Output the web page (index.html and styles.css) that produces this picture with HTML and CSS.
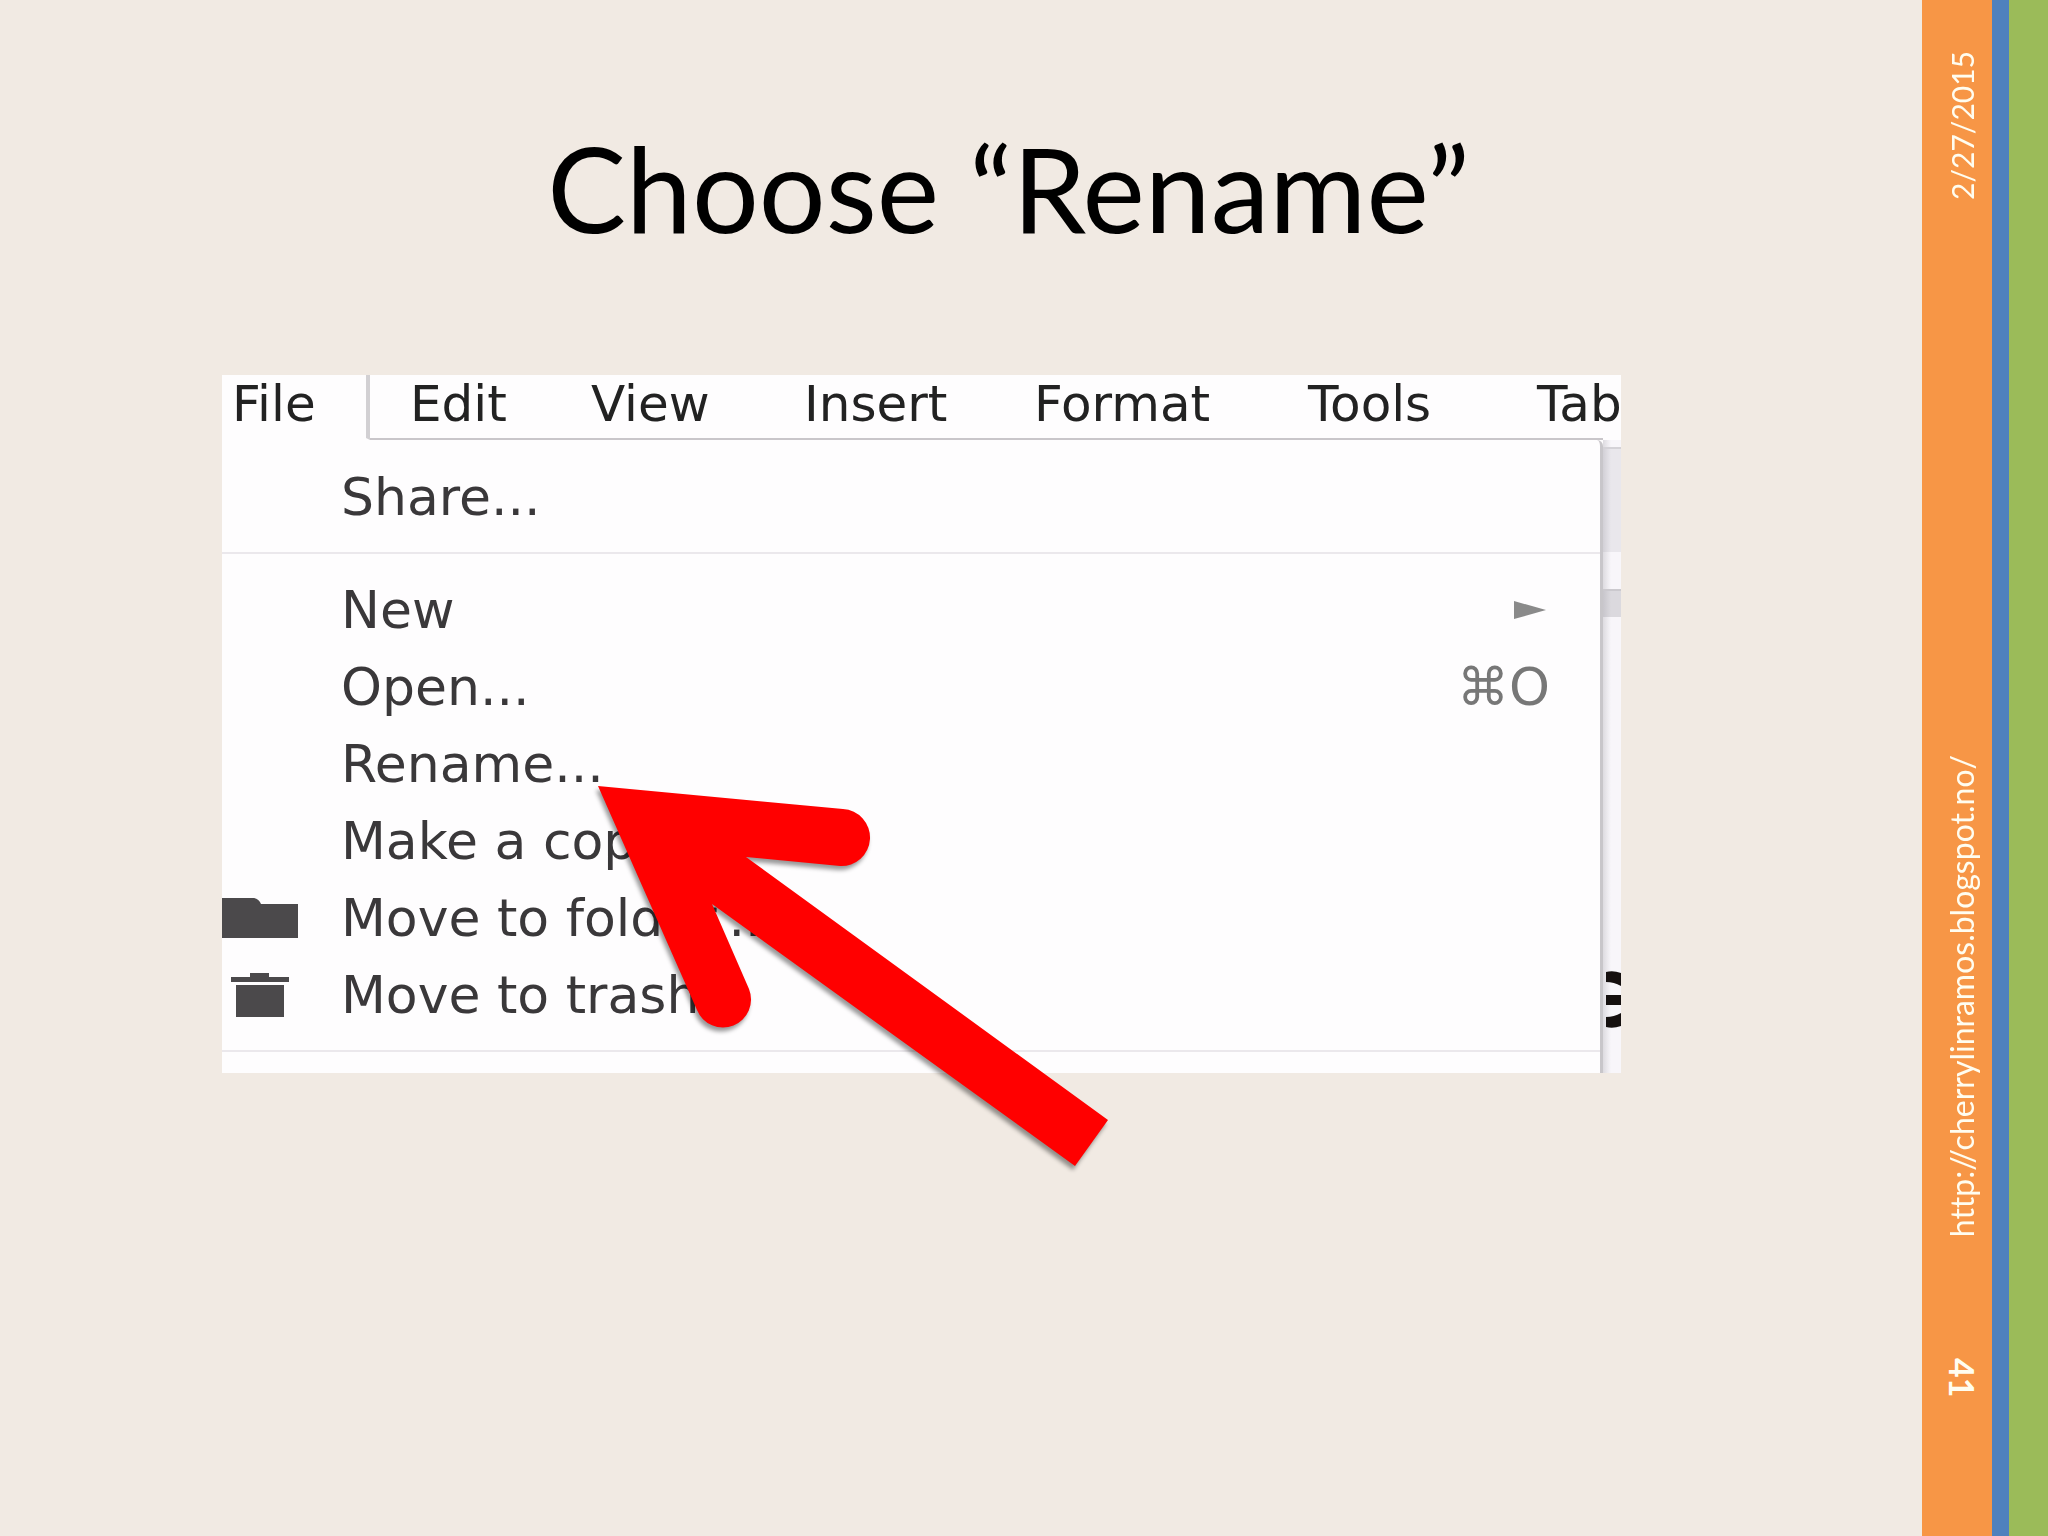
FILE: index.html
```html
<!DOCTYPE html>
<html lang="en">
<head>
    <meta charset="UTF-8">
    <meta name="viewport" content="width=device-width, initial-scale=1.0">
    <title>Choose “Rename”</title>
    <link rel="stylesheet" href="styles.css">
</head>
<body>
    <main class="slide">
        <h1>Choose “Rename”</h1>

        <div class="shot">
            <nav class="menu-bar">
                <button class="active">File</button>
                <button>Edit</button>
                <button>View</button>
                <button>Insert</button>
                <button>Format</button>
                <button>Tools</button>
                <button>Table</button>
            </nav>
            <div class="shot-body">
                <ul class="menu">
                    <li><button><span class="icon"></span>Share...</button></li>
                    <li class="separator"></li>
                    <li>
                        <button><span class="icon"></span>New
                            <svg class="submenu" width="32" height="18" viewBox="0 0 32 18"><path d="M0 0L32 9L0 18Z" fill="#8a8a8a"/></svg>
                        </button>
                    </li>
                    <li><button><span class="icon"></span>Open...<span class="shortcut">⌘O</span></button></li>
                    <li><button><span class="icon"></span>Rename...</button></li>
                    <li><button><span class="icon"></span>Make a copy...</button></li>
                    <li>
                        <button>
                            <span class="icon"><svg width="76" height="40" viewBox="0 0 76 40"><path d="M0 0H32Q37 1 39 6H76V40H0Z" fill="#4b494b"/></svg></span>Move to folder...
                        </button>
                    </li>
                    <li>
                        <button>
                            <span class="icon"><svg width="76" height="44" viewBox="0 0 76 44"><path d="M9 4H28V0H47V4H67V9H9ZM14 12H62V44H14Z" fill="#4b494b"/></svg></span>Move to trash
                        </button>
                    </li>
                    <li class="separator"></li>
                </ul>
                <!-- sliver of the document visible behind the menu -->
                <div class="behind">
                    <div class="toolbar"></div>
                    <div class="ruler"></div>
                    <svg class="letter" width="16" height="57" viewBox="0 0 16 57"><path d="M1 1Q8 -1 16 2V15Q9 11 1 11ZM1 24H16V34H1ZM1 46Q9 46 16 42V55Q8 58 1 56Z" fill="#15100f"/></svg>
                </div>
            </div>

            <svg class="arrow" width="900" height="810" viewBox="0 0 900 810">
                <path d="M376 411L621 434A28 28 0 0 1 618 491L524 482L886 745L853 791L490 529L527 614A28 28 0 0 1 475 635Z" fill="#ff0000"/>
            </svg>
        </div>
    </main>

    <aside class="stripe">
        <time class="date" datetime="2015-02-27">2/27/2015</time>
        <a class="site" href="http://cherrylinramos.blogspot.no/">http://cherrylinramos.blogspot.no/</a>
        <span class="page-number">41</span>
    </aside>
    <div class="blue"></div>
    <div class="green"></div>
</body>
</html>
```

FILE: styles.css
```css
* {
    box-sizing: border-box;
}

body {
    margin: 0;
    min-height: 100vh;
    display: grid;
    grid-template-columns: 1fr 70px 17px 39px;
    background-color: #f1eae3;
    font-family: Lato, "Open Sans", sans-serif;
}

.slide {
    padding: 122px 301px 0 222px;
}

h1 {
    margin: 0 0 121px;
    padding-left: 174px;
    font-size: 118px;
    font-weight: 400;
    line-height: 132px;
    text-align: center;
    white-space: nowrap;
    color: #000;
}

.shot {
    position: relative;
    background: #fefdfe;
    font-family: "DejaVu Sans", sans-serif;
}

button {
    margin: 0;
    padding: 0;
    border: 0;
    background: none;
    font-family: inherit;
    font-size: 52px;
    text-align: left;
    white-space: nowrap;
    color: #3a383a;
}

/* menu bar */
.menu-bar {
    display: grid;
    grid-template-columns: 148fr 181fr 213fr 230fr 274fr 229fr 124fr;
    height: 65px;
}

.menu-bar button {
    min-width: 0;
    padding: 0 0 5px 40px;
    font-size: 50px;
    line-height: 58px;
    color: #222;
    border-bottom: 2px solid #c9c6ca;
}

.menu-bar .active {
    padding-left: 10px;
    border-bottom-color: transparent;
    border-right: 4px solid #d2d0d3;
}

/* the line stops where the drop-down ends */
.menu-bar button:last-child {
    overflow: hidden;
    border-bottom-color: transparent;
    background: linear-gradient(#c9c6ca, #c9c6ca) no-repeat left bottom / calc(100% - 18px) 2px border-box;
}

/* drop-down */
.shot-body {
    display: grid;
    grid-template-columns: 1fr 18px;
}

.menu {
    margin: 0;
    padding: 18px 0 21px;
    list-style: none;
    border-right: 3px solid #c8c6ca;
    border-top-right-radius: 6px;
}

.menu button {
    display: flex;
    align-items: center;
    width: 100%;
    height: 77px;
    padding-right: 50px;
}

.menu .separator {
    height: 2px;
    margin: 17px 0;
    background: #ebe8ec;
}

.menu .separator:last-child {
    margin-bottom: 0;
}

.icon {
    display: flex;
    width: 119px;
}

.submenu,
.shortcut {
    margin-left: auto;
}

.submenu {
    margin-right: 4px;
}

.shortcut {
    color: #777;
}

.behind {
    display: flex;
    flex-direction: column;
    background: linear-gradient(to right, #dddbe0, #f8f6fa 8px);
}

.toolbar {
    height: 105px;
    margin-top: 7px;
    border-top: 2px solid #d4d2d7;
    background: linear-gradient(to right, #d2d0d6, #e9e7ec 8px);
}

.ruler {
    height: 28px;
    margin-top: 37px;
    border-top: 2px solid #cbc9ce;
    background: linear-gradient(to right, #c8c6cc, #dbd9de 8px);
}

.letter {
    margin-top: auto;
    margin-bottom: 45px;
    align-self: flex-end;
}

.arrow {
    position: absolute;
    top: 0;
    left: 0;
    pointer-events: none;
    filter: drop-shadow(-2px 4px 2px rgba(0, 0, 0, 0.4));
}

/* right-hand stripes */
.stripe {
    display: flex;
    flex-direction: column;
    align-items: center;
    padding: 51px 0 139px 10px;
    background: #f79646;
    color: #fffdf0;
    font-size: 30px;
    line-height: 36px;
    font-variant-ligatures: none;
}

.date,
.site {
    writing-mode: vertical-rl;
    transform: rotate(180deg);
}

.site {
    margin-top: auto;
    font-size: 32px;
    color: inherit;
    text-decoration: none;
}

.page-number {
    margin-top: 120px;
    writing-mode: vertical-rl;
    font-size: 34px;
    font-weight: 700;
}

.blue {
    background: #4f81bd;
}

.green {
    background: #9bbb59;
}
```
